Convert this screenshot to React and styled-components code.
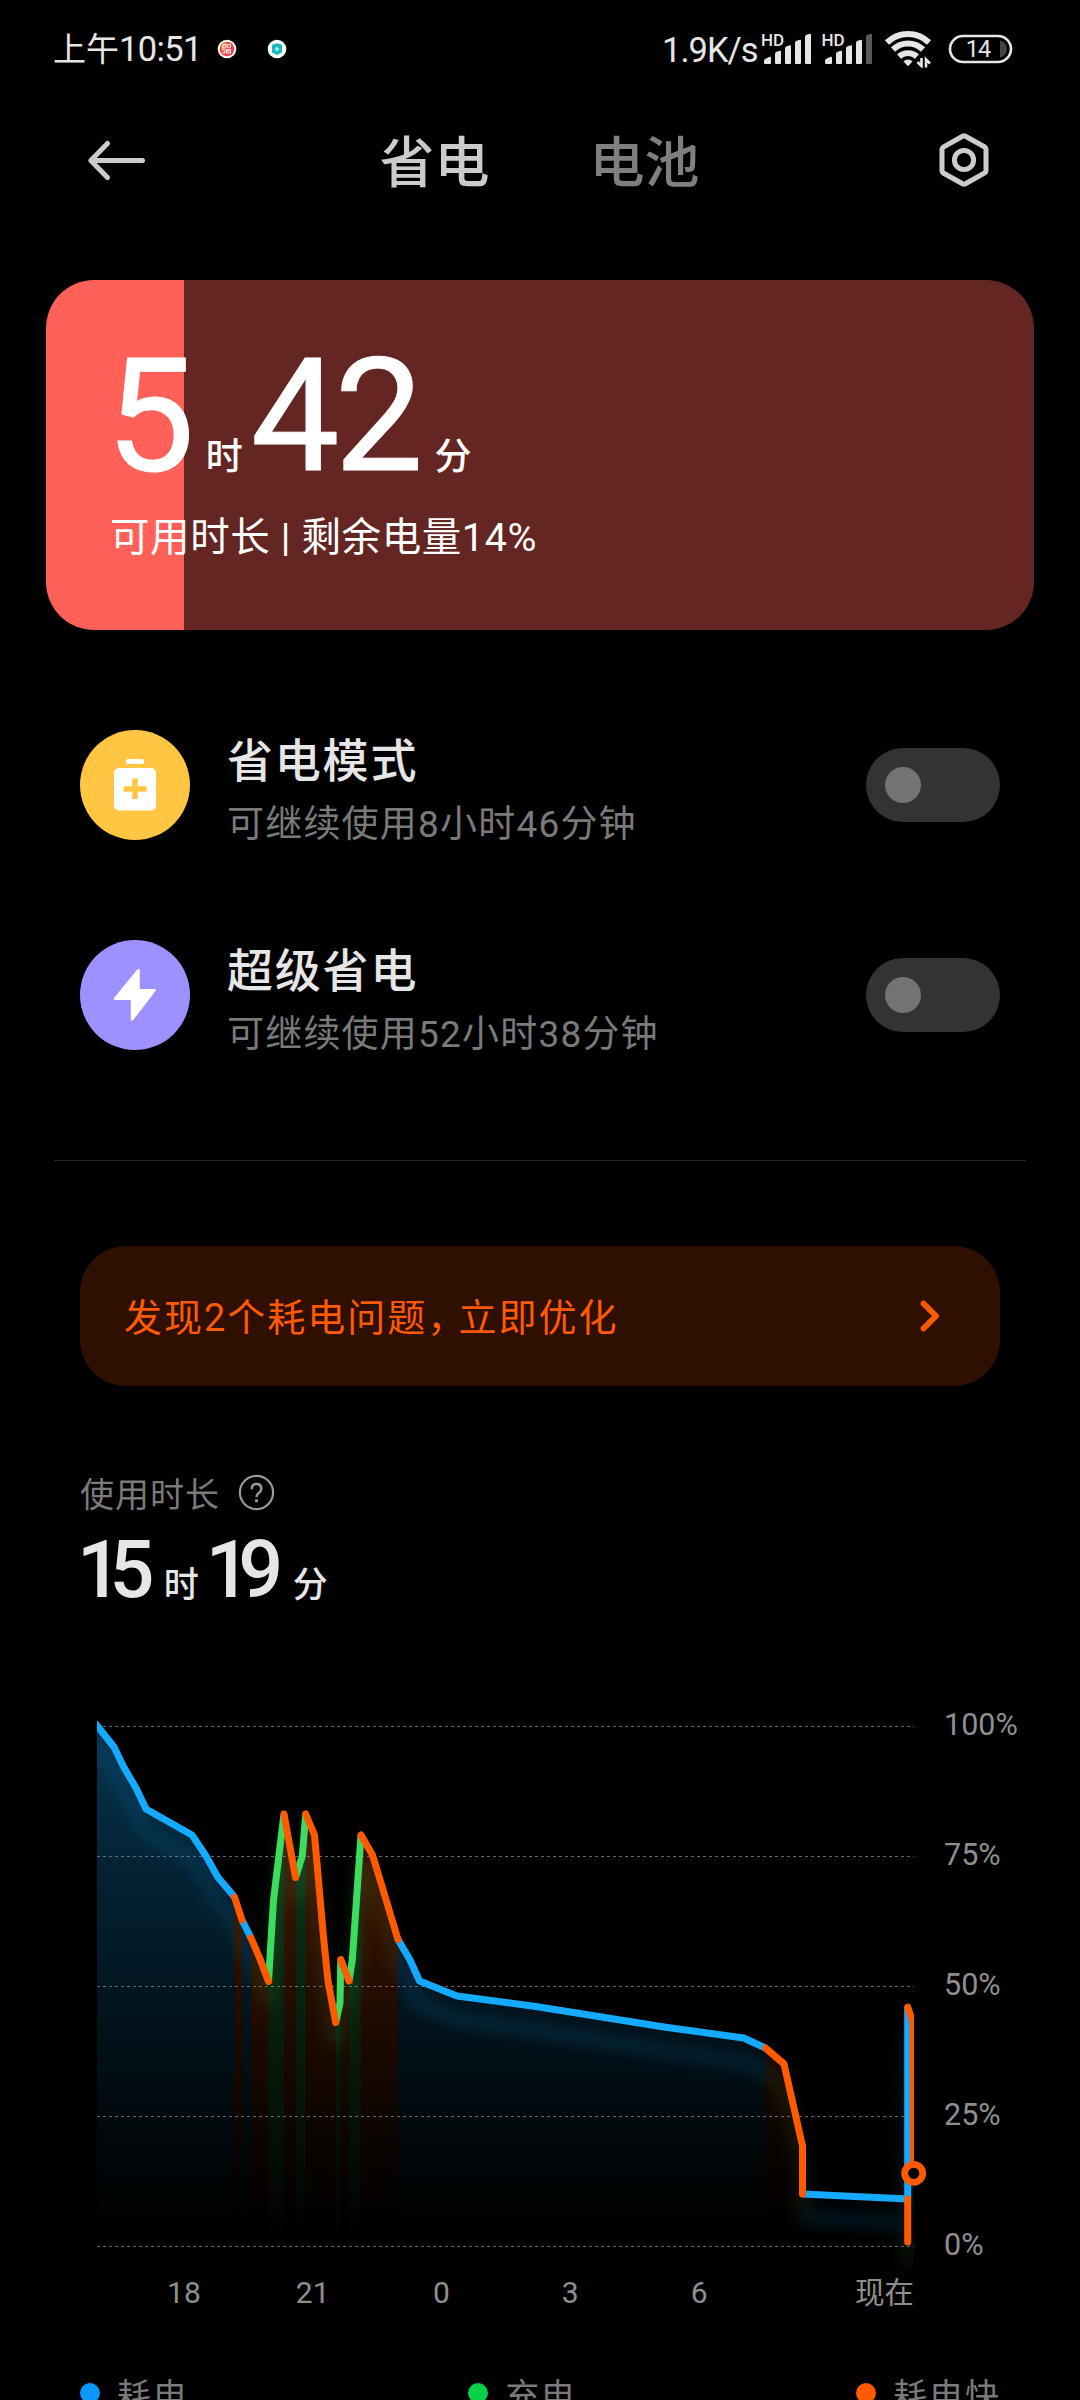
import React from "react";
import styled, { createGlobalStyle } from "styled-components";

const COLORS = {
  primary: "#e6e6e6",
  title: "#cccccc",
  secondary: "#7a7a7a",
  axis: "#8f8f8f",
  blue: "#13aaff",
  green: "#3ddc5f",
  orange: "#ff5a00",
};

// battery level over time, one entry for each run of the same state
const SEGMENTS = [
  {
    type: "blue",
    points: [[95, 1723], [97, 1725.5], [114, 1747], [123.7, 1767], [136, 1788], [146, 1809], [192, 1835], [206, 1856], [217.7, 1877], [234.5, 1897]],
  },
  { type: "blue", points: [[242, 1920], [251, 1938]] },
  { type: "green", points: [[268.5, 1981.5], [273.5, 1900], [284, 1814]] },
  { type: "green", points: [[295.5, 1877.5], [302.3, 1856], [305.7, 1814]] },
  { type: "green", points: [[335.7, 2022.5], [340, 2003], [340.8, 1959.5]] },
  { type: "green", points: [[349, 1981], [352.3, 1960], [361, 1835]] },
  {
    type: "blue",
    points: [[398, 1939.5], [410, 1960], [419.5, 1981], [457, 1996], [536, 2006.5], [664, 2027], [743.7, 2038], [765.5, 2048]],
  },
  { type: "blue", points: [[802.5, 2194], [907.7, 2199]] },
  { type: "blue", points: [[907.7, 2199], [907.7, 2007]] },
  { type: "orange", points: [[234.5, 1897], [242, 1920]] },
  { type: "orange", points: [[251, 1938], [260, 1959], [268.5, 1981.5]] },
  { type: "orange", points: [[284, 1814], [295.5, 1877.5]] },
  { type: "orange", points: [[305.7, 1814], [314.5, 1835], [323.5, 1937], [328, 1981], [335.7, 2022.5]] },
  { type: "orange", points: [[340.8, 1959.5], [349, 1981]] },
  { type: "orange", points: [[361, 1835], [372.5, 1855], [398, 1939.5]] },
  { type: "orange", points: [[765.5, 2048], [784, 2064], [802.5, 2146], [802.5, 2194]] },
  { type: "orange", points: [[907.7, 2199], [907.7, 2242]] },
  { type: "orange", points: [[907.7, 2007], [913, 2023], [913.5, 2173]] },
];

const GRID_LINES = [1726.5, 1856.5, 1986.5, 2116.5, 2246.5];

const toLine = (points) => points.map((p) => p.join(",")).join(" ");

const toArea = (points) =>
  `${points[0][0]},2246 ${toLine(points)} ${points[points.length - 1][0]},2246`;

const SignalBars = ({ weak }) => (
  <svg width="50" height="32" viewBox="0 0 50 32" fill={COLORS.primary}>
    <path d="M1 28q0-1 1-2l4-2q2-1 2 1v5q0 1-1 1H2q-1 0-1-1z" />
    <path d="M12 21q0-1 1-2l3-1q2-1 2 1v11q0 1-1 1h-4q-1 0-1-1z" />
    <path d="M22 15.500q0-1 1-2l3-1q2-1 2 1V30q0 1-1 1h-4q-1 0-1-1z" />
    <path d="M32 10q0-1 1-2l3-1q2-1 2 1v22q0 1-1 1h-4q-1 0-1-1z" />
    <path
      d="M42 4q0-1 1-2l3-1q2-1 2 1v28q0 1-1 1h-4q-1 0-1-1z"
      fill={weak ? "#595959" : COLORS.primary}
    />
  </svg>
);

const WifiIcon = () => (
  <svg width="48" height="38" viewBox="0 0 48 38" fill="none" stroke={COLORS.primary}>
    <path d="M2 12.500a30 30 0 0 1 42 0" strokeWidth="6" />
    <path d="M8 19.500a21.500 21.500 0 0 1 30 0" strokeWidth="6" />
    <path d="M14 26.500a13.500 13.500 0 0 1 18 0" strokeWidth="5.800" />
    <path d="M19 31.500a6 6 0 0 1 8 0l-4 4.200z" fill={COLORS.primary} strokeWidth="1" />
    <path d="M36.500 28v8l-4-4M41 37.500v-8l4 4" strokeWidth="2.600" />
  </svg>
);

const BatteryIcon = () => (
  <svg width="66" height="30" viewBox="0 0 66 30">
    <rect x="2" y="2" width="61" height="26" rx="13" fill="none" stroke={COLORS.primary} strokeWidth="2.600" />
    <path d="M52 6.500q7 2 7 8.500t-7 8.500z" fill="#444" />
    <text x="30" y="23.300" textAnchor="middle" fill={COLORS.primary} fontFamily="Roboto" fontSize="23.500" letterSpacing="-1">
      14
    </text>
  </svg>
);

const RedAppIcon = () => (
  <svg width="20" height="20" viewBox="0 0 20 20">
    <circle cx="10" cy="10" r="9.300" fill="#fff8f0" />
    <circle cx="10" cy="10" r="7.300" fill="#e5494f" />
    <path d="M3.500 7a7 7 0 0 1 6-4v5l-5 3z" fill="#ee8a4a" />
    <path d="M6 9V5.500h3V9zM10.500 5.500h3v2.700h-3zM5 11h3v3H5M9.500 10.500h4V14h-4zM9.500 12h4" fill="none" stroke="#fff" strokeWidth=".9" />
  </svg>
);

const TealAppIcon = () => (
  <svg width="20" height="20" viewBox="0 0 20 20">
    <circle cx="10" cy="10" r="9.300" fill="#fdfefe" />
    <path d="M10 4.300l5 1.500v7.700L10 15.900l-5-2.400V5.800z" fill="#17bcc3" />
    <path d="M10 8v4M8 10h4" stroke="#fff" strokeWidth="1.200" />
  </svg>
);

const BackIcon = () => (
  <svg width="60" height="44" viewBox="0 0 60 44" fill="none" stroke={COLORS.title} strokeWidth="5" strokeLinecap="round" strokeLinejoin="round">
    <path d="M56.500 22.500H5M21.500 5.500L4.800 22.500l16.700 17" />
  </svg>
);

const SettingsIcon = () => (
  <svg width="54" height="58" viewBox="0 0 54 58" fill="none" stroke={COLORS.title} strokeWidth="5">
    <path d="M25.500 5.200q1.500-.8 3 0l18.800 10.600q1.700 1 1.700 3v20.400q0 2-1.700 3L28.500 52.800q-1.500.8-3 0L6.700 42.200Q5 41.200 5 39.200V18.800q0-2 1.700-3z" />
    <circle cx="27" cy="29" r="9.600" />
  </svg>
);

const SaverIcon = () => (
  <svg width="44" height="54" viewBox="0 0 44 54">
    <rect x="13" y="1" width="18" height="5" rx="2" fill="#fff" />
    <rect x="1" y="10" width="42" height="42.500" rx="5" fill="#fff" />
    <path d="M22 20.500v20.500M10.500 31h23" stroke="#ffc543" strokeWidth="5.500" />
  </svg>
);

const BoltIcon = () => (
  <svg width="44" height="54" viewBox="0 0 44 54" fill="#fff">
    <path d="M24 1.800q2.800-2.600 2.800 1V21h14.700q2 0 1 2L20.500 51.800q-2.700 2.700-2.700-1V32H2Q0 32 1 30z" />
  </svg>
);

const HelpIcon = () => (
  <svg width="37" height="37" viewBox="0 0 37 37" fill="none" stroke="#999">
    <circle cx="18.500" cy="18.500" r="16.600" strokeWidth="2.200" />
    <path d="M13.700 15.200q0-5.200 4.800-5.200t4.800 4.700q0 2.500-2.300 4t-2.500 4.300" strokeWidth="2.500" />
    <path d="M18.500 25.300v2.900" strokeWidth="2.800" />
  </svg>
);

const ChevronIcon = () => (
  <svg width="22" height="34" viewBox="0 0 22 34" fill="none" stroke={COLORS.orange} strokeWidth="5.800" strokeLinecap="round" strokeLinejoin="round">
    <path d="M4.500 4.500L17 17 4.500 29.500" />
  </svg>
);

const UsageChart = () => (
  <ChartSvg width="854" height="560" viewBox="80 1700 854 560">
    <defs>
      {["blue", "green", "orange"].map((type) => (
        <linearGradient key={type} id={`fade-${type}`} gradientUnits="userSpaceOnUse" x1="0" x2="0" y1="1726" y2="2240">
          <stop offset="0" stopColor={COLORS[type]} stopOpacity={type === "blue" ? 0.3 : 0.28} />
          <stop offset="0.35" stopColor={COLORS[type]} stopOpacity={type === "blue" ? 0.18 : 0.2} />
          <stop offset="0.8" stopColor={COLORS[type]} stopOpacity={type === "green" ? 0.07 : 0.042} />
          <stop offset="1" stopColor={COLORS[type]} stopOpacity="0" />
        </linearGradient>
      ))}
      <filter id="glow" filterUnits="userSpaceOnUse" x="80" y="1700" width="854" height="600">
        <feGaussianBlur stdDeviation="7" />
      </filter>
      <clipPath id="plot">
        <rect x="97" y="1700" width="817" height="600" />
      </clipPath>
    </defs>
    {GRID_LINES.map((y) => (
      <line key={y} x1="97" x2="914" y1={y} y2={y} stroke="#666" strokeDasharray="3 3" />
    ))}
    <g clipPath="url(#plot)">
      {SEGMENTS.slice(0, -2).map(({ type, points }, index) => (
        <polygon key={index} points={toArea(points)} fill={`url(#fade-${type})`} />
      ))}
      <g filter="url(#glow)" transform="translate(0 24)" opacity="0.12" fill="none" strokeWidth="14">
        {SEGMENTS.map(({ type, points }, index) => (
          <polyline key={index} points={toLine(points)} stroke={type === "orange" ? "#5f9c50" : COLORS[type]} />
        ))}
      </g>
      <g fill="none" strokeWidth="7" strokeLinejoin="round">
        {SEGMENTS.map(({ type, points }, index) => (
          <polyline
            key={index}
            points={toLine(points)}
            stroke={COLORS[type]}
            strokeLinecap={type === "orange" ? "round" : "butt"}
          />
        ))}
      </g>
    </g>
    <circle cx="913.700" cy="2173.300" r="9" fill="#000" stroke={COLORS.orange} strokeWidth="6.800" />
  </ChartSvg>
);

const ModeRow = ({ color, icon, title, children }) => (
  <Row>
    <RoundIcon $color={color}>{icon}</RoundIcon>
    <RowText>
      <RowTitle>{title}</RowTitle>
      <RowHint>{children}</RowHint>
    </RowText>
    <Toggle type="button" role="switch" aria-checked="false" aria-label={title}>
      <Knob />
    </Toggle>
  </Row>
);

const App = () => (
  <Screen>
    <GlobalStyle />
    <StatusBar>
      <Clock>
        上午<Digits>10:51</Digits>
      </Clock>
      <AppIcons>
        <RedAppIcon />
        <TealAppIcon />
      </AppIcons>
      <Speed>1.9K/s</Speed>
      <Signal>
        <HdLabel>HD</HdLabel>
        <SignalBars />
      </Signal>
      <Signal>
        <HdLabel>HD</HdLabel>
        <SignalBars weak />
      </Signal>
      <StatusIcons>
        <WifiIcon />
        <BatteryIcon />
      </StatusIcons>
    </StatusBar>

    <Header>
      <BackIcon />
      <Tabs>
        <Tab $active>省电</Tab>
        <Tab>电池</Tab>
      </Tabs>
      <SettingsIcon />
    </Header>

    <BatteryCard>
      <Remaining>
        <BigNumber>5</BigNumber>
        <BigUnit>时</BigUnit>
        <BigNumber>42</BigNumber>
        <BigUnit>分</BigUnit>
      </Remaining>
      <CardHint>可用时长 | 剩余电量14%</CardHint>
    </BatteryCard>

    <Modes>
      <ModeRow color="#ffc543" icon={<SaverIcon />} title="省电模式">
        可继续使用8小时46分钟
      </ModeRow>
      <ModeRow color="#9c91ff" icon={<BoltIcon />} title="超级省电">
        可继续使用52小时38分钟
      </ModeRow>
    </Modes>

    <Divider />

    <Banner>
      <BannerText>
        发现2个耗电问题<Comma>，</Comma>立即优化
      </BannerText>
      <ChevronIcon />
    </Banner>

    <UsageLabel>
      <span>使用时长</span>
      <HelpIcon />
    </UsageLabel>
    <UsageTime>
      <MidNumber>15</MidNumber>
      <MidUnit>时</MidUnit>
      <MidNumber>19</MidNumber>
      <MidUnit>分</MidUnit>
    </UsageTime>

    <Chart>
      <UsageChart />
      <YAxis>
        <span>100%</span>
        <span>75%</span>
        <span>50%</span>
        <span>25%</span>
        <span>0%</span>
      </YAxis>
    </Chart>
    <XAxis>
      <span>18</span>
      <span>21</span>
      <span>0</span>
      <span>3</span>
      <span>6</span>
      <Now>现在</Now>
    </XAxis>

    <Legend>
      <LegendItem $color="#0a98ff">耗电</LegendItem>
      <LegendItem $color="#08d048">充电</LegendItem>
      <LegendItem $color={COLORS.orange}>耗电快</LegendItem>
    </Legend>
  </Screen>
);

const GlobalStyle = createGlobalStyle`
  * {
    box-sizing: border-box;
  }
  body {
    margin: 0;
    background: #000;
  }
  svg {
    display: block;
    flex-shrink: 0;
  }
`;

const Screen = styled.main`
  width: 1080px;
  height: 2400px;
  overflow: hidden;
  background: #000;
  color: ${COLORS.primary};
  font-family: Roboto, "Noto Sans CJK SC", sans-serif;
  white-space: nowrap;
`;

const StatusBar = styled.div`
  display: flex;
  align-items: center;
  height: 98px;
  padding-left: 53px;
`;

const Clock = styled.div`
  width: 164px;
  font-size: 33px;
  line-height: 48px;
`;

const Digits = styled.span`
  font-size: 34.5px;
  letter-spacing: -0.6px;
`;

const AppIcons = styled.div`
  display: flex;
  gap: 30px;
  width: 445px;
`;

const Speed = styled.div`
  width: 101px;
  padding-top: 1px;
  font-size: 34.5px;
  letter-spacing: -1px;
`;

const Signal = styled.div`
  position: relative;
  width: 60.5px;
`;

const HdLabel = styled.span`
  position: absolute;
  top: -1px;
  left: -2px;
  font-size: 17px;
  font-weight: 500;
  line-height: 16px;
`;

const StatusIcons = styled.div`
  display: flex;
  align-items: center;
  gap: 15px;
  padding-left: 1px;
`;

const Header = styled.header`
  display: flex;
  align-items: center;
  justify-content: space-between;
  height: 124px;
  padding: 0 89px 0 86px;
`;

const Tabs = styled.nav`
  display: flex;
  gap: 100px;
  padding: 5px 4px 0 0;
`;

const Tab = styled.span`
  font-size: 55px;
  line-height: 80px;
  font-weight: 500;
  color: ${(props) => (props.$active ? COLORS.title : "#7f7f7f")};
`;

const BatteryCard = styled.section`
  height: 350px;
  margin: 58px 46px 0;
  padding: 60px 60px 0;
  border-radius: 48px;
  color: #fff;
  background: linear-gradient(to right, #ff6058 14%, #642622 14%);
`;

const Remaining = styled.div`
  display: flex;
  align-items: baseline;
  height: 152px;
`;

const BigNumber = styled.span`
  font-size: 158px;
  line-height: 152px;
  letter-spacing: -5px;
  -webkit-text-stroke: 1px #fff;
`;

const BigUnit = styled.span`
  margin: 0 8px 0 16px;
  font-size: 37px;
  font-weight: 500;
`;

const CardHint = styled.div`
  margin-top: 16px;
  padding-left: 4px;
  font-size: 39.5px;
  line-height: 60px;
  letter-spacing: 0.6px;
`;

const Modes = styled.section`
  display: flex;
  flex-direction: column;
  gap: 100px;
  padding: 100px 80px 0;
`;

const Row = styled.div`
  display: flex;
  align-items: center;
  height: 110px;
`;

const RoundIcon = styled.div`
  display: flex;
  align-items: center;
  justify-content: center;
  width: 110px;
  height: 110px;
  border-radius: 50%;
  background: ${(props) => props.$color};
`;

const RowText = styled.div`
  flex: 1;
  padding: 17px 0 0 37px;
`;

const RowTitle = styled.div`
  font-size: 46px;
  line-height: 63px;
  font-weight: 500;
  letter-spacing: 1.8px;
`;

const RowHint = styled.div`
  color: ${COLORS.secondary};
  font-size: 37px;
  line-height: 64px;
  letter-spacing: 1.2px;
`;

const Toggle = styled.button`
  width: 134px;
  height: 74px;
  padding: 0 19px;
  border: none;
  border-radius: 37px;
  background: #333;
`;

const Knob = styled.span`
  display: block;
  width: 36px;
  height: 36px;
  border-radius: 50%;
  background: #737373;
`;

const Divider = styled.hr`
  height: 1px;
  margin: 110px 54px 85px;
  border: none;
  background: #242424;
`;

const Banner = styled.div`
  display: flex;
  align-items: center;
  justify-content: space-between;
  height: 140px;
  margin: 0 80px;
  padding: 0 59px 0 44px;
  border-radius: 46px;
  background: #2e0f00;
  color: ${COLORS.orange};
`;

const BannerText = styled.span`
  padding-bottom: 3px;
  font-size: 38px;
  letter-spacing: 2px;
`;

const Comma = styled.span`
  letter-spacing: -7px;
`;

const UsageLabel = styled.div`
  display: flex;
  align-items: center;
  gap: 18px;
  height: 50px;
  margin-top: 81px;
  padding-left: 80px;
  color: ${COLORS.secondary};
  font-size: 34px;
  letter-spacing: 1px;
`;

const UsageTime = styled.div`
  display: flex;
  align-items: baseline;
  height: 90px;
  margin-top: 8px;
  padding-left: 77px;
`;

const MidNumber = styled.span`
  font-size: 79px;
  line-height: 90px;
  font-weight: 500;
  letter-spacing: -12.5px;
`;

const MidUnit = styled.span`
  margin: 0 7px 0 22px;
  font-size: 35px;
  font-weight: 500;
`;

const Chart = styled.section`
  display: flex;
  height: 560px;
  margin: 85px 0 0 80px;
`;

const ChartSvg = styled.svg`
  overflow: visible;
`;

const YAxis = styled.div`
  padding: 5px 0 0 10px;
  color: ${COLORS.axis};
  font-size: 30.5px;

  span {
    display: block;
    height: 130px;
    line-height: 40px;
  }
`;

const XAxis = styled.div`
  display: flex;
  height: 40px;
  margin-top: 13px;
  padding-left: 119.5px;
  color: ${COLORS.axis};
  font-size: 30px;
  line-height: 40px;

  span {
    width: 128.8px;
    text-align: center;
  }
`;

const Now = styled.strong`
  flex: 1;
  padding-right: 166px;
  font-weight: 400;
  font-size: 29.5px;
  text-align: right;
`;

const Legend = styled.footer`
  display: flex;
  justify-content: space-between;
  margin-top: 55px;
  padding: 0 79px 0 80px;
`;

const LegendItem = styled.div`
  display: flex;
  align-items: center;
  gap: 17px;
  height: 50px;
  color: ${COLORS.secondary};
  font-size: 34px;
  letter-spacing: 1.9px;

  &::before {
    content: "";
    width: 20px;
    height: 20px;
    border-radius: 50%;
    background: ${(props) => props.$color};
  }
`;

export default App;
